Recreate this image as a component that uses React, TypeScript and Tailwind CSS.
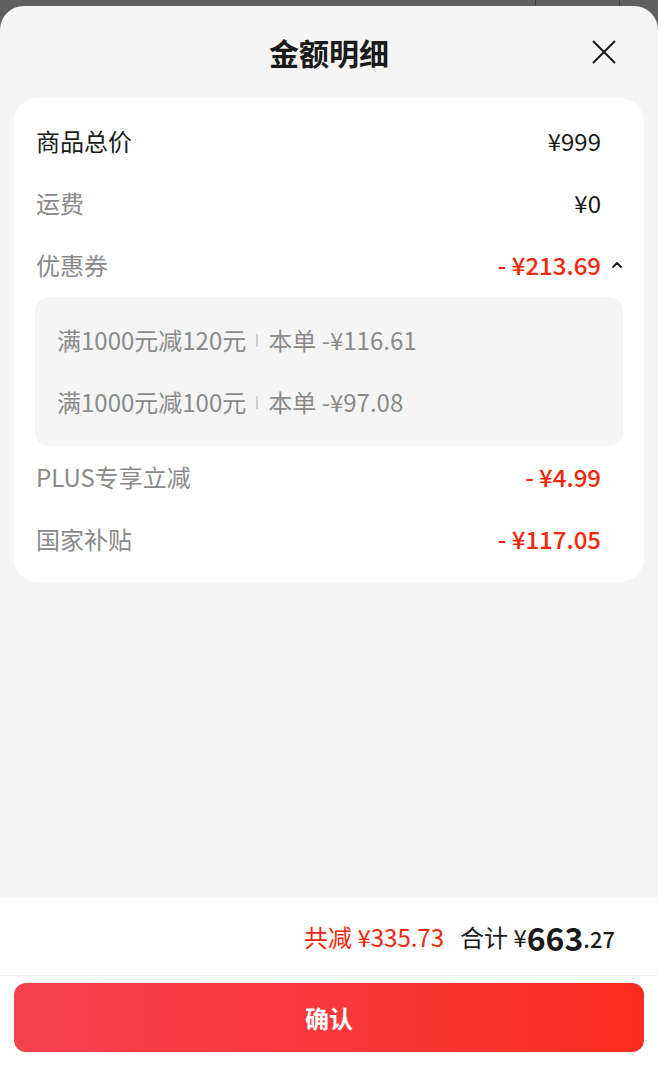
import React from 'react';

const font = { fontFamily: '"Noto Sans CJK SC", "Noto Sans", sans-serif' };

interface RowProps {
  label: string;
  value: string;
  labelDark?: boolean;
  red?: boolean;
}

const Row: React.FC<RowProps> = ({ label, value, labelDark, red }) => (
  <div className="flex h-[62px] items-center justify-between pl-[1px] pr-[22px]">
    <span className={`text-[24px] ${labelDark ? 'text-[#1a1a1a]' : 'text-[#8a8a8a]'}`}>{label}</span>
    <span className={`text-[24px] ${red ? 'font-medium text-[#f2270c]' : 'text-[#1a1a1a]'}`}>{value}</span>
  </div>
);

const coupons = [
  { rule: '满1000元减120元', amount: '-¥116.61' },
  { rule: '满1000元减100元', amount: '-¥97.08' },
];

export default function App() {
  return (
    <div className="relative flex h-[1067px] flex-col bg-[#5f5f5f] pt-[6px]" style={font}>
      {/* background page peeking above the sheet */}
      <div className="absolute left-[535px] top-0 h-[6px] w-[1px] bg-[#3d3d3d]" />
      <div className="absolute left-[619px] top-0 h-[6px] w-[1px] bg-[#3d3d3d]" />

      <div className="flex flex-1 flex-col overflow-hidden rounded-t-[24px] bg-[#f5f5f5]">
        {/* Header */}
        <div className="relative flex h-[92px] items-center justify-center">
          <h1 className="text-[30px] font-bold text-[#1a1a1a]">金额明细</h1>
          <button className="absolute right-[42px] top-[34px] flex h-[24px] w-[24px] items-center justify-center">
            <svg width="24" height="24" viewBox="0 0 24 24" fill="none" stroke="#1a1a1a" strokeWidth="2" strokeLinecap="round">
              <path d="M1.5 1.5 L22.5 22.5 M22.5 1.5 L1.5 22.5" />
            </svg>
          </button>
        </div>

        {/* Detail card */}
        <div className="mx-[14px] rounded-[24px] bg-white px-[21px] pb-[12px] pt-[12px]">
          <Row label="商品总价" value="¥999" labelDark />
          <Row label="运费" value="¥0" />
          <div className="flex h-[62px] items-center justify-between pl-[1px]">
            <span className="text-[24px] text-[#8a8a8a]">优惠券</span>
            <div className="flex items-center">
              <span className="text-[24px] font-medium text-[#f2270c]">- ¥213.69</span>
              <span className="flex w-[22px] justify-end">
                <svg width="12" height="8" viewBox="0 0 12 8" fill="none" stroke="#1a1a1a" strokeWidth="1.8" strokeLinecap="round" strokeLinejoin="round">
                  <path d="M2 6 L6 2 L10 6" />
                </svg>
              </span>
            </div>
          </div>
          <div className="mt-[1px] rounded-[14px] bg-[#f5f5f5] pb-[13px] pl-[22px] pt-[12px]">
            {coupons.map((c, i) => (
              <div key={i} className="flex h-[62px] items-center text-[24px] text-[#8a8a8a]">
                <span>{c.rule}</span>
                <span className="mx-[10px] h-[13px] w-[2px] bg-[#d0d0d0]" />
                <span>本单 {c.amount}</span>
              </div>
            ))}
          </div>
          <Row label="PLUS专享立减" value="- ¥4.99" red />
          <Row label="国家补贴" value="- ¥117.05" red />
        </div>

        <div className="flex-1" />

        {/* Footer totals */}
        <div className="flex h-[77px] items-center justify-end bg-white pr-[43px]">
          <span className="text-[24px] text-[#f2270c]">共减 ¥335.73</span>
          <span className="ml-[16px] text-[24px] text-[#1a1a1a]">合计 ¥</span>
          <span className="text-[32px] font-semibold leading-none text-[#1a1a1a]">663</span>
          <span className="self-center pt-[4px] text-[22px] font-medium text-[#1a1a1a]">.27</span>
        </div>
        <div className="h-[1px] bg-[#eeeeee]" />
        <div className="bg-white px-[14px] pb-[15px] pt-[7px]">
          <button className="flex h-[69px] w-full items-center justify-center rounded-[12px] bg-gradient-to-r from-[#f5414f] to-[#fa2c1c] text-[24px] font-bold text-white">
            确认
          </button>
        </div>
      </div>
    </div>
  );
}
